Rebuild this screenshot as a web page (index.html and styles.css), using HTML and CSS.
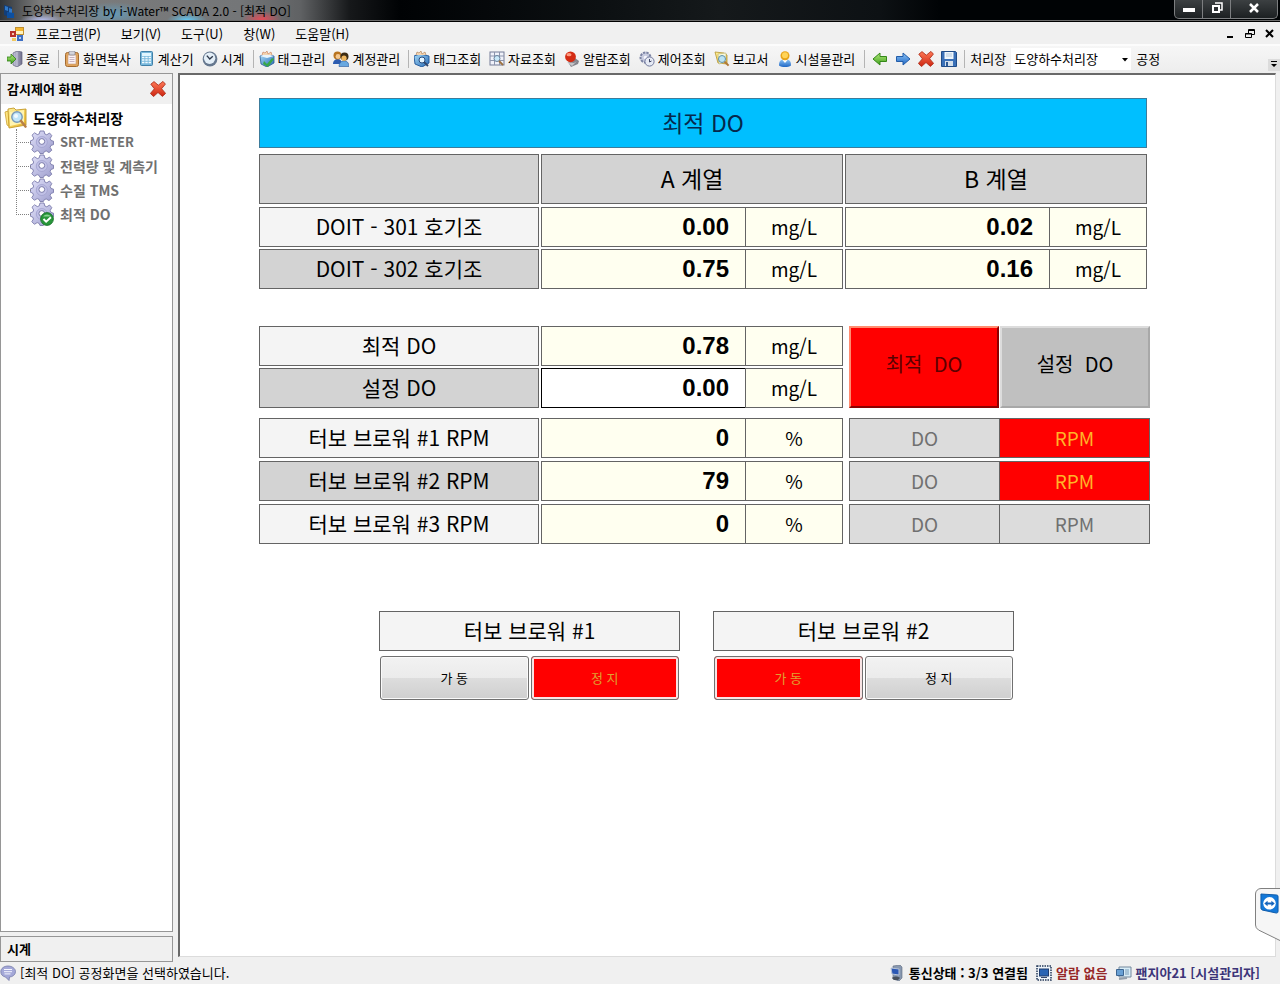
FILE: index.html
```html
<!DOCTYPE html>
<html lang="ko">
<head>
<meta charset="utf-8">
<meta name="viewport" content="width=device-width, initial-scale=1">
<title>도양하수처리장 by i-Water™ SCADA 2.0 - [최적 DO]</title>
<link rel="stylesheet" href="styles.css">
</head>
<body>
<svg class="sprite" aria-hidden="true">
  <defs>
    <linearGradient id="g-blue" x1="0" y1="0" x2="1" y2="1"><stop offset="0" stop-color="#a9dcf8"/><stop offset="1" stop-color="#2468b4"/></linearGradient>
    <linearGradient id="g-green" x1="0" y1="0" x2="0" y2="1"><stop offset="0" stop-color="#b4ea7c"/><stop offset="1" stop-color="#3f9f1c"/></linearGradient>
    <linearGradient id="g-arrow" x1="0" y1="0" x2="0" y2="1"><stop offset="0" stop-color="#8cc4f6"/><stop offset="1" stop-color="#1f66c4"/></linearGradient>
    <linearGradient id="g-red" x1="0" y1="0" x2="0" y2="1"><stop offset="0" stop-color="#ff7a58"/><stop offset="1" stop-color="#cc2410"/></linearGradient>
    <linearGradient id="g-gear" x1="0" y1="0" x2="1" y2="1"><stop offset="0" stop-color="#e2e2fa"/><stop offset="1" stop-color="#9c9ccc"/></linearGradient>
    <linearGradient id="g-gold" x1="0" y1="0" x2="1" y2="1"><stop offset="0" stop-color="#fff3a0"/><stop offset="1" stop-color="#e8b020"/></linearGradient>
    <linearGradient id="g-door" x1="0" y1="0" x2="1" y2="0"><stop offset="0" stop-color="#c4c4dc"/><stop offset="1" stop-color="#70708c"/></linearGradient>
  </defs>
  <symbol id="i-app" viewBox="0 0 16 16"><path d="M3 2l8 2v11l-8-3z" fill="#123e78"/><path d="M4 3l3 1v4L4 7zM8 5l3 1v8l-3-1z" fill="#2f78c8"/><path d="M6 9l7 1v5H6z" fill="#0c4fa0"/></symbol>
  <symbol id="i-forms" viewBox="0 0 16 16"><rect x="6.500" y="1.500" width="8" height="7" fill="#fff3c0" stroke="#c09030"/><rect x="7" y="2" width="7" height="3" fill="#f4b630"/><rect x="1" y="5" width="6" height="6" fill="#b83028"/><rect x="3" y="7" width="2" height="2" fill="#f4c4b0"/><path d="M3 12h4v3H3z" fill="#f0c860"/><rect x="8" y="9" width="6" height="6" fill="#3c6ec4"/><rect x="10" y="11" width="2" height="2" fill="#b8d0f4"/></symbol>
  <symbol id="i-exit" viewBox="0 0 16 16"><path d="M6 2l4-2 5 1v12l-5 3-4-2z" fill="url(#g-door)" stroke="#62627c" stroke-width=".7"/><path d="M10 1v14" stroke="#d8d8e8" stroke-width=".8"/><path d="M0 6h4V3l5 5-5 5v-3H0z" fill="url(#g-green)" stroke="#2f7f18" stroke-width=".8"/></symbol>
  <symbol id="i-clip" viewBox="0 0 16 16"><rect x="1.500" y="1.500" width="13" height="14" rx="2" fill="#e0a45c" stroke="#a46a30"/><rect x="4" y="4" width="8" height="9" fill="#fbf3f6" stroke="#c49878" stroke-width=".6"/><rect x="5" y="0" width="6" height="4" rx="1" fill="#d4d4dc" stroke="#80808c" stroke-width=".7"/><path d="M5.500 6.500h5M5.500 8.500h5M5.500 10.500h5" stroke="#c8b4c4"/></symbol>
  <symbol id="i-calc" viewBox="0 0 16 16"><rect x="1.500" y=".5" width="12" height="14" rx="1" fill="#78b8dc" stroke="#4080a8"/><rect x="3" y="2" width="9" height="3" fill="#e0f6ff"/><path d="M3 6.500h2.400M6.300 6.500h2.400M9.600 6.500H12M3 9h2.400M6.300 9h2.400M9.600 9H12M3 11.500h2.400M6.300 11.500h2.400M9.600 11.500H12" stroke="#f2fbff" stroke-width="1.500"/></symbol>
  <symbol id="i-clock" viewBox="0 0 16 16"><circle cx="8" cy="8" r="7.400" fill="#66788f"/><circle cx="7.600" cy="7.300" r="5.700" fill="#e4eff8"/><path d="M4.800 4.600L7.800 8l3-2.800" fill="none" stroke="#303a4c" stroke-width="1.400"/></symbol>
  <symbol id="i-tag" viewBox="0 0 16 16"><path d="M1 5l6-2 8 2v7l-7 4-6-3z" fill="url(#g-blue)" stroke="#285c94" stroke-width=".8"/><path d="M1 5l6-2 8 2-7 2z" fill="#e8f4fc"/><path d="M3 4l1-3 2 1 2-2 1 3 3-2 1 3" fill="#f4d4b0" stroke="#c87850" stroke-width=".6"/><path d="M5 10l3 3 5-6 2 1-6 8-5-3z" fill="#38a848"/></symbol>
  <symbol id="i-users" viewBox="0 0 16 16"><path d="M0 13c0-6 9-7 9 0z" fill="#2c5cb0"/><path d="M6 15.500c0-7 10-8 10 0z" fill="#68a8e0" stroke="#28589c" stroke-width=".6"/><circle cx="4.500" cy="4.500" r="4" fill="#b87420"/><circle cx="5" cy="5.500" r="2.400" fill="#f4c890"/><circle cx="11.500" cy="5.500" r="4" fill="#3c2c14"/><circle cx="11" cy="7.200" r="2.600" fill="#f0b860"/></symbol>
  <symbol id="i-tagview" viewBox="0 0 16 16"><path d="M0 5l6-2 9 2v7l-7 4-7-3z" fill="url(#g-blue)" stroke="#1c5498" stroke-width=".9"/><path d="M2 4l1-3 2 1 2-2 1 3 3-2 1 3" fill="#f4d4b0" stroke="#a87850" stroke-width=".6"/><circle cx="8" cy="9" r="3" fill="#e6f6ff" stroke="#284c80"/><path d="M10 11l4 4" stroke="#32486c" stroke-width="1.800"/></symbol>
  <symbol id="i-grid" viewBox="0 0 16 16"><rect x="1" y="1" width="14" height="13" fill="#f0f2fa" stroke="#747c98"/><path d="M1 5h14M1 9.500h14M5.500 1v13M10.500 1v13" stroke="#8c94ac"/><circle cx="8" cy="7.500" r="3" fill="#c8e8f8" stroke="#68809c"/><path d="M10 10l4 4" stroke="#9c7040" stroke-width="1.800"/></symbol>
  <symbol id="i-alarm" viewBox="0 0 16 16"><path d="M4 11l7-4 4 3-1 3-7 3z" fill="#84848c"/><path d="M3 11l7 1 3-2-5 5z" fill="#c4c4c8"/><circle cx="6.500" cy="5.800" r="5.400" fill="#d42c14"/><ellipse cx="5" cy="3.700" rx="2.500" ry="1.600" fill="#ff9b80"/></symbol>
  <symbol id="i-control" viewBox="0 0 16 16"><circle cx="6.500" cy="6.500" r="5" fill="#c8cce0" stroke="#7c84a4" stroke-width="2" stroke-dasharray="2.400 1"/><circle cx="6.500" cy="6.500" r="1.800" fill="#f6f6fc"/><circle cx="10.500" cy="10.500" r="4.600" fill="#e6eaf4" stroke="#70789c"/><path d="M10.500 8v3l2-1" fill="none" stroke="#404868"/></symbol>
  <symbol id="i-report" viewBox="0 0 16 16"><path d="M1 1l9 1 3 2v9l-9-1z" fill="url(#g-gold)" stroke="#b49430" stroke-width=".8"/><path d="M4 3l8-1v9l-7 2z" fill="#fafadc" stroke="#b8b070" stroke-width=".6"/><circle cx="8" cy="8" r="3.500" fill="#bce4f4" stroke="#6090a8"/><path d="M10.600 10.600l4 4" stroke="#b07838" stroke-width="2"/></symbol>
  <symbol id="i-person" viewBox="0 0 16 16"><path d="M2 14.500c0-6 3-6 6-6s6 0 6 6c-3 2-9 2-12 0z" fill="url(#g-arrow)"/><path d="M5.500 9l2.500 3 2.500-3z" fill="#fff"/><circle cx="8" cy="4.800" r="4.500" fill="#e8a418"/><circle cx="8" cy="4.200" r="3" fill="#ffd458"/></symbol>
  <symbol id="i-back" viewBox="0 0 16 16"><path d="M1 8l7-6v3.500h6.500v5H8V14z" fill="url(#g-green)" stroke="#348818" stroke-linejoin="round"/></symbol>
  <symbol id="i-next" viewBox="0 0 16 16"><path d="M15 8L8 2v3.500H1.500v5H8V14z" fill="url(#g-arrow)" stroke="#225ca8" stroke-linejoin="round"/></symbol>
  <symbol id="i-x" viewBox="0 0 16 16"><path d="M.8 3.200L4 .6 8.300 4.200 13 .4l2.400 2.700L11.600 7.700l4 4.700-3.200 3L8 11.500 3.500 15.600.4 12.400l4-4.600z" fill="url(#g-red)" stroke="#a82410" stroke-width=".8" stroke-linejoin="round"/></symbol>
  <symbol id="i-save" viewBox="0 0 16 16"><path d="M.5.500h14l1 1v14H.500z" fill="#3a70b8" stroke="#204c88"/><rect x="3.500" y="1" width="9" height="7" fill="#eef6fc"/><path d="M5 3h6M5 5h6" stroke="#b4c8dc"/><rect x="4" y="10" width="8" height="5" fill="#d4e0ec"/><rect x="5" y="11" width="2" height="4" fill="#2c5894"/></symbol>
  <symbol id="i-folder" viewBox="0 0 24 24"><path d="M1 6l3-1 1 3 1 13-3-2z" fill="#ffe680" stroke="#caa030" stroke-width=".8"/><path d="M4 3l6-1 2 2 10-1v16l-17 3z" fill="url(#g-gold)" stroke="#c49a28" stroke-width=".9"/><path d="M6 6l14-2v13L6 20z" fill="#fff4b0"/><circle cx="13" cy="11" r="5.200" fill="#c0e6fa" stroke="#7898b8" stroke-width="1.400"/><circle cx="12" cy="10" r="2" fill="#f2fbff"/><path d="M17 15l4.500 5.500" stroke="#b88048" stroke-width="2.600" stroke-linecap="round"/></symbol>
  <symbol id="i-gear" viewBox="0 0 24 24"><path d="M10 1h4l.8 3 2 .8L19.500 3l2.300 2.600L20.200 8.500l.8 2 2.500.7v3.400l-2.500.8-.9 2 1.700 2.800-2.800 2.400-2.800-1.700-2 .9-.8 1.700H10l-.8-2-2-.9-2.800 1.700-2.600-2.600L3.500 17l-.9-2-2.100-.7v-3.500l2.300-.8.9-2L2 5.200l2.600-2.400L7.300 4.600l2-.8z" fill="url(#g-gear)" stroke="#7c7cac" stroke-width=".9" stroke-linejoin="round"/><circle cx="11.800" cy="12" r="5.500" fill="#c0c0e6" stroke="#9c9ccc" stroke-width=".7"/><circle cx="11.800" cy="11.500" r="2.900" fill="#fff" stroke="#7878a8"/></symbol>
  <symbol id="i-check" viewBox="0 0 16 16"><circle cx="8" cy="8" r="7.300" fill="#28963a" stroke="#187028"/><path d="M3.500 5a6 6 0 0 1 9 0z" fill="#88d490"/><path d="M4 8l3 3 5.500-5" fill="none" stroke="#fff" stroke-width="2.200"/></symbol>
  <symbol id="i-chat" viewBox="0 0 16 16"><path d="M8 1c4 0 7.500 2.500 7.500 5.600S12.500 12 9.500 12L9 15.500 5.500 12C2.500 11.500.8 9.500.8 6.600.8 3.500 4 1 8 1z" fill="#a4a8d8" stroke="#7478a8" stroke-width=".8"/><path d="M4 4.500h8M4 6.700h8M4.500 8.900h6" stroke="#f6f6ff"/></symbol>
  <symbol id="i-net" viewBox="0 0 16 16"><path d="M4 1l7-1 2 2v11l-3 3-6-2z" fill="#8898b0" stroke="#5c687c" stroke-width=".6"/><path d="M2 3l8 1v6l-7-1z" fill="#2c58b4" stroke="#b8c4d8"/><path d="M3 13c2-2 6-2 8 0l-2 2H5z" fill="#48505c"/></symbol>
  <symbol id="i-screen" viewBox="0 0 16 16"><rect x="1" y="1" width="14" height="14" fill="#eef4fa" stroke="#243858" stroke-width="1.500" stroke-dasharray="1.500 1"/><rect x="3.500" y="4" width="9" height="7" fill="#2864b4" stroke="#203c6c"/><path d="M5 12.500h6" stroke="#34486c"/></symbol>
  <symbol id="i-card" viewBox="0 0 16 16"><path d="M3 2h12v10H3z" fill="#d8ecf6" stroke="#74889c"/><path d="M.5 4.500h7v6h-7z" fill="#68a0d4" stroke="#3c6490"/><path d="M9 5h4M9 7h4M9 9h4" stroke="#789cb8"/><path d="M3 14l8-1" stroke="#94a0ac" stroke-width="2"/></symbol>
  <symbol id="i-remote" viewBox="0 0 20 24"><path d="M1 2l16 1c2 0 2 1 2 2v15c0 2-1 2-2 2L3 19c-1 0-2-1-2-2z" fill="#1478d8" stroke="#0c58a8"/><circle cx="10" cy="11.800" r="6.600" fill="#fff"/><path d="M4.500 12L8 9v2h4V9l3.500 3-3.500 3v-2H8v2z" fill="#1464bc"/></symbol>
</svg>

<header class="titlebar">
  <svg class="icon"><use href="#i-app"/></svg>
  <h1 class="titlebar-text">도양하수처리장 by i-Water™ SCADA 2.0 - [최적 DO]</h1>
  <div class="window-controls">
    <button type="button" aria-label="최소화"><svg width="12" height="12"><path d="M0 6h12v4H0z" fill="#fff"/></svg></button>
    <button type="button" aria-label="이전 크기로"><svg width="12" height="12"><path d="M4 1h7v7H9" fill="none" stroke="#fff" stroke-width="1.500"/><path d="M2 4h6v6H2z" fill="none" stroke="#fff" stroke-width="2"/></svg></button>
    <button type="button" class="close" aria-label="닫기"><svg width="12" height="12"><path d="M2 2l8 8M10 2l-8 8" stroke="#fff" stroke-width="2.500"/></svg></button>
  </div>
</header>

<nav class="menubar" aria-label="메뉴">
  <svg class="icon"><use href="#i-forms"/></svg>
  <button type="button">프로그램(P)</button>
  <button type="button">보기(V)</button>
  <button type="button">도구(U)</button>
  <button type="button">창(W)</button>
  <button type="button">도움말(H)</button>
  <div class="mdi-controls">
    <button type="button" aria-label="창 최소화"><svg width="10" height="10"><path d="M2 7h6v2H2z"/></svg></button>
    <button type="button" aria-label="창 복원"><svg width="10" height="10"><path d="M3.500 4V.500h6v5H7M3 1.500h7M.5 4.500h6v4h-6zM0 5h7" fill="none" stroke="#000"/></svg></button>
    <button type="button" aria-label="창 닫기"><svg width="10" height="10"><path d="M1 1l7 7M8 1L1 8" stroke="#000" stroke-width="2"/></svg></button>
  </div>
</nav>

<div class="toolbar" role="toolbar" aria-label="도구 모음">
  <button type="button"><svg class="icon"><use href="#i-exit"/></svg>종료</button>
  <span class="separator"></span>
  <button type="button"><svg class="icon"><use href="#i-clip"/></svg>화면복사</button>
  <button type="button"><svg class="icon"><use href="#i-calc"/></svg>계산기</button>
  <button type="button"><svg class="icon"><use href="#i-clock"/></svg>시계</button>
  <span class="separator"></span>
  <button type="button"><svg class="icon"><use href="#i-tag"/></svg>태그관리</button>
  <button type="button"><svg class="icon"><use href="#i-users"/></svg>계정관리</button>
  <span class="separator"></span>
  <button type="button"><svg class="icon"><use href="#i-tagview"/></svg>태그조회</button>
  <button type="button"><svg class="icon"><use href="#i-grid"/></svg>자료조회</button>
  <button type="button"><svg class="icon"><use href="#i-alarm"/></svg>알람조회</button>
  <button type="button"><svg class="icon"><use href="#i-control"/></svg>제어조회</button>
  <button type="button"><svg class="icon"><use href="#i-report"/></svg>보고서</button>
  <button type="button"><svg class="icon"><use href="#i-person"/></svg>시설물관리</button>
  <span class="separator wide"></span>
  <button type="button" class="icon-only" aria-label="뒤로"><svg class="icon"><use href="#i-back"/></svg></button>
  <button type="button" class="icon-only" aria-label="앞으로"><svg class="icon"><use href="#i-next"/></svg></button>
  <button type="button" class="icon-only" aria-label="삭제"><svg class="icon"><use href="#i-x"/></svg></button>
  <button type="button" class="icon-only" aria-label="저장"><svg class="icon"><use href="#i-save"/></svg></button>
  <span class="separator"></span>
  <label class="plant-label" for="plant">처리장</label>
  <span class="plant-select">
    <select id="plant"><option>도양하수처리장</option></select>
    <svg width="6" height="4" aria-hidden="true"><path d="M0 0h6L3 3.500z"/></svg>
  </span>
  <span>공정</span>
  <button type="button" class="overflow" aria-label="도구 모음 옵션"><svg width="8" height="8"><path d="M1 0h6v1H1zM1 3h6L4 6z"/></svg></button>
</div>

<div class="workspace">
  <aside class="sidebar">
    <section class="panel panel-tree">
      <header class="panel-head">
        <h2>감시제어 화면</h2>
        <button type="button" aria-label="패널 닫기"><svg class="icon"><use href="#i-x"/></svg></button>
      </header>
      <div class="tree">
        <div class="tree-root"><svg class="icon-large"><use href="#i-folder"/></svg>도양하수처리장</div>
        <ul>
          <li><svg class="icon-large"><use href="#i-gear"/></svg><a href="#srt" class="latin">SRT-METER</a></li>
          <li><svg class="icon-large"><use href="#i-gear"/></svg><a href="#power">전력량 및 계측기</a></li>
          <li><svg class="icon-large"><use href="#i-gear"/></svg><a href="#tms">수질 TMS</a></li>
          <li><svg class="icon-large"><use href="#i-gear"/></svg><svg class="tree-check"><use href="#i-check"/></svg><a href="#do" aria-current="page">최적 DO</a></li>
        </ul>
      </div>
    </section>
    <section class="panel panel-clock"><h2>시계</h2></section>
  </aside>

  <main class="canvas">
    <table class="readings readings-series">
      <caption>최적 DO</caption>
      <thead>
        <tr><td class="head"></td><th class="head" scope="col">A 계열</th><th class="head" scope="col">B 계열</th></tr>
      </thead>
      <tbody>
        <tr>
          <th scope="row">DOIT - 301 호기조</th>
          <td><span class="value">0.00</span><span class="unit">mg/L</span></td>
          <td><span class="value">0.02</span><span class="unit">mg/L</span></td>
        </tr>
        <tr>
          <th scope="row">DOIT - 302 호기조</th>
          <td><span class="value">0.75</span><span class="unit">mg/L</span></td>
          <td><span class="value">0.16</span><span class="unit">mg/L</span></td>
        </tr>
      </tbody>
    </table>

    <section class="control-block block-do">
      <table class="readings">
        <tbody>
          <tr><th scope="row">최적 DO</th><td><span class="value">0.78</span><span class="unit">mg/L</span></td></tr>
          <tr><th scope="row"><label for="set-do">설정 DO</label></th><td><input class="value" id="set-do" type="text" value="0.00"><span class="unit">mg/L</span></td></tr>
        </tbody>
      </table>
      <div class="mode-pair">
        <button type="button" class="mode active">최적&nbsp; DO</button>
        <button type="button" class="mode">설정&nbsp; DO</button>
      </div>
    </section>

    <section class="control-block block-rpm">
      <table class="readings">
        <tbody>
          <tr><th scope="row">터보 브로워 #1 RPM</th><td><span class="value">0</span><span class="unit">%</span></td></tr>
          <tr><th scope="row">터보 브로워 #2 RPM</th><td><span class="value">79</span><span class="unit">%</span></td></tr>
          <tr><th scope="row">터보 브로워 #3 RPM</th><td><span class="value">0</span><span class="unit">%</span></td></tr>
        </tbody>
      </table>
      <div class="toggles">
        <div class="toggle"><button type="button">DO</button><button type="button" class="active">RPM</button></div>
        <div class="toggle"><button type="button">DO</button><button type="button" class="active">RPM</button></div>
        <div class="toggle"><button type="button">DO</button><button type="button">RPM</button></div>
      </div>
    </section>

    <div class="blowers">
      <section class="blower">
        <h2>터보 브로워 #1</h2>
        <div class="blower-buttons"><button type="button">가 동</button><button type="button" class="active">정 지</button></div>
      </section>
      <section class="blower">
        <h2>터보 브로워 #2</h2>
        <div class="blower-buttons"><button type="button" class="active">가 동</button><button type="button">정 지</button></div>
      </section>
    </div>
  </main>

  <button type="button" class="remote-tab" aria-label="원격 제어">
    <svg class="remote-shape" viewBox="0 0 25 53"><path d="M26 .5H6a5.500 5.500 0 0 0-5.500 5.500v31q0 3 3 5L26 53" fill="#f6f6f6" stroke="#808080"/></svg>
    <svg class="remote-logo"><use href="#i-remote"/></svg>
  </button>
</div>

<footer class="statusbar">
  <svg class="icon"><use href="#i-chat"/></svg>
  <span class="message">[최적 DO] 공정화면을 선택하였습니다.</span>
  <div class="status-items">
    <span class="status-item"><svg class="icon"><use href="#i-net"/></svg>통신상태 : 3/3 연결됨</span>
    <span class="status-item alarm"><svg class="icon"><use href="#i-screen"/></svg>알람 없음</span>
    <span class="status-item user"><svg class="icon"><use href="#i-card"/></svg>팬지아21 [시설관리자]</span>
  </div>
</footer>
</body>
</html>
```
FILE: styles.css
```css
:root {
  --face: #f0f0f0;
  --line: #646464;
  --ivory: #fffff0;
  --stripe: #d3d3d3;
  --alert: #ff0000;
}

* { box-sizing: border-box; }

body {
  margin: 0;
  min-height: 100vh;
  display: flex;
  flex-direction: column;
  background: var(--face);
  color: #000;
  font: 13px/18px "Noto Sans CJK KR", sans-serif;
}

button, input, select {
  margin: 0;
  padding: 0;
  border: 0;
  border-radius: 0;
  background: none;
  color: inherit;
  font: inherit;
}

h1, h2 { margin: 0; font: inherit; }
svg { display: block; flex: none; }
.sprite { position: absolute; width: 0; height: 0; }
.icon { width: 16px; height: 16px; }
.icon-large { width: 24px; height: 24px; }

/* Title bar */
.titlebar {
  display: flex;
  align-items: center;
  height: 22px;
  padding: 0 2px 0 1px;
  gap: 5px;
  border-bottom: 1px solid #000;
  box-shadow: inset 0 -1px #6c6c6c;
  background:
    radial-gradient(ellipse 22px 6px at 42px 20px, #b4bcec, transparent),
    radial-gradient(ellipse 20px 7px at 187px 20px, #62c8f4, transparent),
    radial-gradient(ellipse 20px 8px at 262px 19px, #e44c58, transparent),
    radial-gradient(ellipse 34px 12px at 114px 14px, #6699b4, transparent),
    linear-gradient(90deg, #303438 0, #7c7c7c 40px, #747678 240px, #606264 300px, #16181a 350px, #000204 400px, #0c1012 600px, #15191b 720px, #0d1114 880px, #000305 940px, #000305 100%);
}
.titlebar-text { font-size: 12px; }
.window-controls {
  display: flex;
  align-self: flex-start;
  height: 19px;
  margin-left: auto;
  border: 1px solid #7c7e80;
  border-top: 0;
  border-radius: 0 0 5px 5px;
  background: linear-gradient(#3c4042, #1c2022);
}
.window-controls button {
  display: grid;
  place-items: center;
  width: 28px;
  padding-bottom: 2px;
  border-right: 1px solid #7c7e80;
}
.window-controls .close { width: 46px; border-right: 0; }

/* Menu bar */
.menubar {
  display: flex;
  align-items: center;
  gap: 20px;
  height: 24px;
  padding: 2px 5px 0 9px;
  border-bottom: 2px solid #fcfcfc;
}
.menubar > .icon { margin-right: -9px; }
.mdi-controls { display: flex; gap: 10px; margin-left: auto; }

/* Toolbar */
.toolbar {
  display: flex;
  align-items: center;
  height: 27px;
  padding: 0 0 2px 3px;
  white-space: nowrap;
  background: linear-gradient(#f6f6f6, #ededed);
}
.toolbar button {
  display: flex;
  align-items: center;
  gap: 3px;
  padding: 0 4px;
}
.toolbar .icon-only { padding: 0 3px 0 4px; }
.separator { width: 1px; height: 18px; margin: 0 1px 0 4px; background: #b4b4b4; }
.separator.wide { margin: 0 3px 0 5px; }
.plant-label { margin: 0 5px 0 4px; }
.plant-select { position: relative; width: 120px; margin-right: 5px; background: #fff; }
.plant-select select { width: 100%; height: 22px; padding-left: 3px; appearance: none; }
.plant-select svg { position: absolute; right: 3px; top: 10px; pointer-events: none; }
.toolbar .overflow {
  align-self: flex-end;
  margin-left: auto;
  padding: 2px;
  background: #dcdcdc;
}

/* Workspace */
.workspace {
  position: relative;
  flex: 1;
  display: flex;
  gap: 5px;
  padding-right: 4px;
}
.sidebar {
  flex: none;
  width: 173px;
  display: flex;
  flex-direction: column;
  gap: 4px;
}
.panel { border: 1px solid #969696; background: #fff; }
.panel-tree { flex: 1; }
.panel h2 { font-weight: bold; }
.panel-head {
  display: flex;
  align-items: center;
  justify-content: space-between;
  height: 30px;
  padding: 0 6px;
  background: var(--face);
}
.panel-clock { padding: 3px 6px; background: var(--face); }

.tree { padding: 2px 3px; font-size: 14px; font-weight: bold; }
.tree-root { display: flex; align-items: center; gap: 5px; height: 24px; }
.tree ul { margin: 0; padding: 0 0 0 12px; list-style: none; }
.tree li {
  position: relative;
  display: flex;
  align-items: center;
  gap: 6px;
  height: 24px;
  padding-left: 14px;
}
.tree li::before {
  content: "";
  position: absolute;
  left: 0;
  bottom: 11px;
  width: 14px;
  height: 24px;
  border: dotted #808080;
  border-width: 0 0 1px 1px;
}
.tree li:first-child::before { height: 13px; }
.tree a { color: #707070; text-decoration: none; }
.tree .latin { font-size: 13px; }
.tree-check { position: absolute; left: 24px; bottom: 0; width: 14px; height: 14px; }

/* Process screen */
.canvas {
  flex: 1;
  margin-bottom: 5px;
  padding: 23px 125px 23px 79px;
  border: solid;
  border-width: 2px 1px 1px 2px;
  border-color: #696969 #dcdcdc #dcdcdc #696969;
  background: #fff;
}

.readings { display: block; font-size: 21px; line-height: 24px; }
.readings-series { margin-right: 3px; }
.readings caption {
  display: grid;
  place-items: center;
  height: 50px;
  margin-bottom: 6px;
  padding-bottom: 2px;
  border: 1px solid #3c7c9c;
  background: #00bfff;
  color: #06284c;
  font-size: 23px;
}
.readings thead { display: block; margin-bottom: 3px; }
.readings tbody { display: grid; gap: 2px; }
.readings tr { display: grid; grid-template-columns: 280fr 302fr; gap: 2px; }
.readings-series tr { grid-template-columns: 280fr 302fr 302fr; }
.readings th, .readings td {
  min-width: 0;
  height: 40px;
  padding: 0;
  border: 1px solid var(--line);
  background: var(--ivory);
  font-weight: normal;
}
.readings td { display: grid; grid-template-columns: 203fr 97fr; }
.readings th {
  display: grid;
  place-items: center;
  padding-bottom: 2px;
  background: #f4f4f4;
}
.readings tr:nth-child(even) th { background: var(--stripe); }
.readings .head { height: 50px; background: var(--stripe); font-size: 23px; }

.value {
  min-width: 0;
  padding: 7px 16px 7px 0;
  font: bold 24px/24px "Liberation Sans", sans-serif;
  text-align: right;
}
input.value {
  height: 40px;
  margin: -1px 0 -1px -1px;
  padding: 0 16px 0 0;
  border: 1px solid #000;
  border-right: 0;
  background: #fff;
}
.unit {
  display: grid;
  place-items: center;
  border-left: 1px solid var(--line);
  font-size: 19px;
}

.control-block { display: grid; grid-template-columns: 584fr 301fr; gap: 6px; }
.block-do { margin-top: 37px; }
.block-rpm { margin-top: 10px; }
.block-rpm tbody, .toggles { display: grid; gap: 3px; }

.mode-pair { display: grid; grid-template-columns: 1fr 1fr; gap: 1px; font-size: 20px; }
.mode {
  padding-bottom: 6px;
  border: 2px solid;
  border-color: #dcdcdc #a8a8a8 #a8a8a8 #dcdcdc;
  background: #c0c0c0;
}
.mode.active {
  border-color: #ff8c70 #8c0000 #8c0000 #ff8c70;
  background: var(--alert);
  color: #5c0000;
}

.toggle {
  display: grid;
  grid-template-columns: 149fr 150fr;
  height: 40px;
  border: 1px solid var(--line);
  background: #dcdcdc;
  color: #707070;
  font-size: 19px;
}
.toggle button + button { border-left: 1px solid var(--line); }
.toggle .active { background: var(--alert); color: #ffb428; }

.blowers {
  display: grid;
  grid-template-columns: 1fr 1fr;
  gap: 33px;
  margin: 67px 136px 0 120px;
}
.blower h2 {
  display: grid;
  place-items: center;
  height: 40px;
  padding-bottom: 2px;
  border: 1px solid var(--line);
  background: #f4f4f4;
  font-size: 21px;
}
.blower-buttons {
  display: grid;
  grid-template-columns: 1fr 1fr;
  gap: 2px;
  margin: 5px 1px 0;
}
.blower-buttons button {
  height: 44px;
  border: 1px solid #707070;
  border-radius: 3px;
  box-shadow: inset 0 0 0 1px #fafafa;
  background: linear-gradient(#f2f2f2 0, #ebebeb 50%, #dddddd 50%, #cfcfcf 100%);
}
.blower-buttons .active {
  box-shadow: inset 0 0 0 2px #f8e4e4;
  background: var(--alert);
  color: #e0a030;
}

/* Tab docked to the right window edge, over the process screen */
.remote-tab { position: absolute; right: 0; bottom: 21px; width: 25px; height: 53px; }
.remote-shape { width: 25px; height: 53px; }
.remote-logo { position: absolute; left: 5px; top: 4px; width: 19px; height: 23px; }

/* Status bar */
.statusbar { display: flex; align-items: center; gap: 4px; height: 22px; white-space: nowrap; }
.status-items { display: flex; gap: 8px; margin-left: auto; padding-right: 20px; font-weight: bold; }
.status-item { display: flex; align-items: center; gap: 4px; }
.alarm { color: #962828; }
.user { color: #3c3478; }
```
